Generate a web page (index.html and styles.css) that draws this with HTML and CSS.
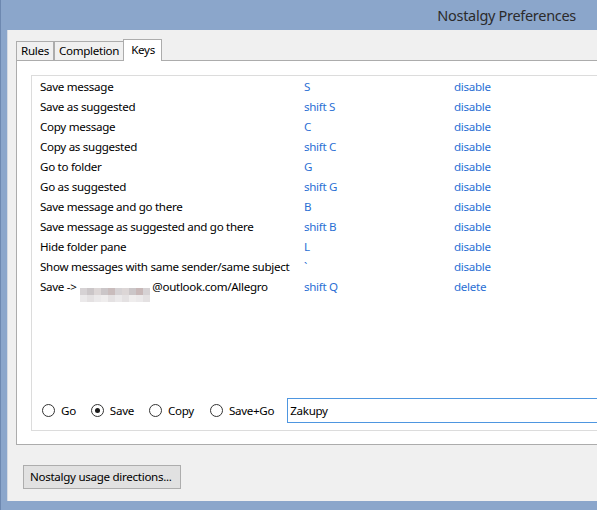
FILE: index.html
```html
<!DOCTYPE html>
<html>
<head>
<meta charset="utf-8">
<link rel="stylesheet" href="styles.css">
</head>
<body>
<div class="window">
  <div class="titlebar"><span class="title">Nostalgy Preferences</span></div>
  <div class="client">
    <div class="tabs">
      <div class="tab">Rules</div>
      <div class="tab">Completion</div>
      <div class="tab active">Keys</div>
    </div>
    <div class="panel">
      <div class="box">
        <div class="list">
          <div class="row"><span>Save message</span><span class="link">S</span><span class="link">disable</span></div>
          <div class="row"><span>Save as suggested</span><span class="link">shift S</span><span class="link">disable</span></div>
          <div class="row"><span>Copy message</span><span class="link">C</span><span class="link">disable</span></div>
          <div class="row"><span>Copy as suggested</span><span class="link">shift C</span><span class="link">disable</span></div>
          <div class="row"><span>Go to folder</span><span class="link">G</span><span class="link">disable</span></div>
          <div class="row"><span>Go as suggested</span><span class="link">shift G</span><span class="link">disable</span></div>
          <div class="row"><span>Save message and go there</span><span class="link">B</span><span class="link">disable</span></div>
          <div class="row"><span>Save message as suggested and go there</span><span class="link">shift B</span><span class="link">disable</span></div>
          <div class="row"><span>Hide folder pane</span><span class="link">L</span><span class="link">disable</span></div>
          <div class="row"><span>Show messages with same sender/same subject</span><span class="link">`</span><span class="link">disable</span></div>
          <div class="row"><span class="rule">Save -&gt; <span class="blur"><i class="b1"></i><i class="b2"></i><i class="b3"></i><i class="b2"></i><i class="b4"></i><i class="b1"></i><i class="b3"></i><i class="b2"></i><i class="b5"></i><i class="b1"></i><i class="c1"></i><i class="c2"></i><i class="c1"></i><i class="c3"></i><i class="c2"></i><i class="c1"></i><i class="c2"></i><i class="c3"></i><i class="c1"></i><i class="c2"></i></span>@outlook.com/Allegro</span><span class="link">shift Q</span><span class="link">delete</span></div>
        </div>
        <div class="controls">
          <label class="radio"><span class="circle"></span>Go</label>
          <label class="radio"><span class="circle checked"></span>Save</label>
          <label class="radio"><span class="circle"></span>Copy</label>
          <label class="radio"><span class="circle"></span>Save+Go</label>
          <div class="textbox">Zakupy</div>
        </div>
      </div>
    </div>
    <div class="footer">
      <div class="btn">Nostalgy usage directions...</div>
    </div>
  </div>
</div>
</body>
</html>
```

FILE: styles.css
```css
html, body {
  margin: 0;
  padding: 0;
}
body {
  width: 597px;
  height: 510px;
  overflow: hidden;
  font-family: "Noto Sans", "Open Sans", sans-serif;
  font-size: 11.6px;
  letter-spacing: -0.3px;
  color: #000;
}
.window {
  width: 597px;
  height: 510px;
  background: #8ba6cb;
  border-left: 1px solid #6d88b0;
  box-sizing: border-box;
  display: flex;
  flex-direction: column;
}
.titlebar {
  height: 30px;
  display: flex;
  align-items: center;
  justify-content: flex-end;
  padding-right: 21px;
}
.title {
  font-size: 14.5px;
  color: #2b2b2b;
  margin-top: -1px;
}
.client {
  margin-left: 6px;
  height: 471px;
  background: #f0f0f0;
  border-left: 1px solid #d4dae3;
  overflow: hidden;
  display: flex;
  flex-direction: column;
  padding: 9px 0 0 8px;
  box-sizing: border-box;
}
.tabs {
  display: flex;
  align-items: flex-end;
  height: 21px;
  position: relative;
  z-index: 2;
}
.tab {
  height: 19px;
  box-sizing: border-box;
  border: 1px solid #acacac;
  border-bottom: none;
  background: #f0f0f0;
  padding: 0 4px;
  line-height: 18px;
}
.tab.active {
  height: 22px;
  margin-bottom: -1px;
  margin-left: -1px;
  background: #fff;
  padding: 0 6px 0 7px;
  line-height: 19px;
}
.panel {
  width: 640px;
  height: 385px;
  box-sizing: border-box;
  border: 1px solid #acacac;
  background: #fff;
  padding: 14px 0 13px 14px;
}
.box {
  height: 100%;
  box-sizing: border-box;
  border: 1px solid #dcdcdc;
  display: flex;
  flex-direction: column;
}
.list {
  height: 321px;
  padding-top: 1px;
}
.row {
  display: grid;
  grid-template-columns: 264px 150px auto;
  height: 20px;
  line-height: 20px;
  padding-left: 8px;
  white-space: nowrap;
}
.link {
  color: #2a6fd4;
}
.blur {
  display: inline-grid;
  grid-template-columns: repeat(10, 7px);
  grid-template-rows: 7px 7px;
  vertical-align: -4px;
  margin: 0 2px 0 1px;
}
.blur i { display: block; }
.b1 { background: #d6d2d4; }
.b2 { background: #cbc6c8; }
.b3 { background: #dcd6d6; }
.b4 { background: #c9bcbc; }
.b5 { background: #c8b8b8; }
.c1 { background: #ebe9ea; }
.c2 { background: #e4e1e2; }
.c3 { background: #efeded; }
.controls {
  display: flex;
  align-items: center;
  height: 25px;
  padding-left: 10px;
}
.radio {
  display: flex;
  align-items: center;
  margin-right: 15px;
}
.radio:nth-child(3) {
  margin-right: 16px;
}
.radio:last-of-type {
  margin-right: 13px;
}
.circle {
  width: 13px;
  height: 13px;
  box-sizing: border-box;
  border: 1px solid #333;
  border-radius: 50%;
  background: #fff;
  margin-right: 6px;
  display: flex;
  align-items: center;
  justify-content: center;
}
.circle.checked::after {
  content: "";
  width: 5px;
  height: 5px;
  border-radius: 50%;
  background: #1a1a1a;
}
.textbox {
  flex: 1;
  height: 25px;
  box-sizing: border-box;
  border: 1px solid #4e96e0;
  line-height: 23px;
  padding-left: 2px;
}
.footer {
  padding: 20px 0 0 7px;
}
.btn {
  display: inline-block;
  width: 158px;
  height: 24px;
  box-sizing: border-box;
  border: 1px solid #adadad;
  background: #e1e1e1;
  line-height: 22px;
  padding-left: 6px;
  white-space: nowrap;
}
```
